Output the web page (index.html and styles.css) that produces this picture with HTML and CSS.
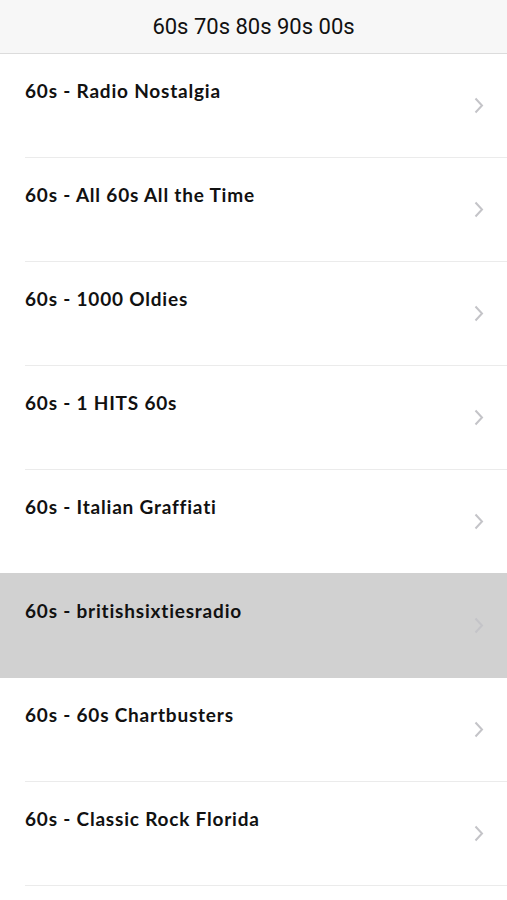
FILE: index.html
```html
<!DOCTYPE html>
<html lang="en">
<head>
<meta charset="UTF-8">
<title>60s 70s 80s 90s 00s</title>
<link rel="stylesheet" href="styles.css">
</head>
<body>
    <div class="barra">60s 70s 80s 90s 00s</div>
    <ul class="lista">
        <li class="voce"><span class="nome">60s - Radio Nostalgia</span><span class="freccia"><svg width="10" height="17" viewBox="0 0 10 17"><path d="M1.5 1.5 L8 8.5 L1.5 15.5" fill="none" stroke="#c4c4c8" stroke-width="2"/></svg></span></li>
        <li class="voce"><span class="nome">60s - All 60s All the Time</span><span class="freccia"><svg width="10" height="17" viewBox="0 0 10 17"><path d="M1.5 1.5 L8 8.5 L1.5 15.5" fill="none" stroke="#c4c4c8" stroke-width="2"/></svg></span></li>
        <li class="voce"><span class="nome">60s - 1000 Oldies</span><span class="freccia"><svg width="10" height="17" viewBox="0 0 10 17"><path d="M1.5 1.5 L8 8.5 L1.5 15.5" fill="none" stroke="#c4c4c8" stroke-width="2"/></svg></span></li>
        <li class="voce"><span class="nome">60s - 1 HITS 60s</span><span class="freccia"><svg width="10" height="17" viewBox="0 0 10 17"><path d="M1.5 1.5 L8 8.5 L1.5 15.5" fill="none" stroke="#c4c4c8" stroke-width="2"/></svg></span></li>
        <li class="voce"><span class="nome">60s - Italian Graffiati</span><span class="freccia"><svg width="10" height="17" viewBox="0 0 10 17"><path d="M1.5 1.5 L8 8.5 L1.5 15.5" fill="none" stroke="#c4c4c8" stroke-width="2"/></svg></span></li>
        <li class="voce selezionata"><span class="nome">60s - britishsixtiesradio</span><span class="freccia"><svg width="10" height="17" viewBox="0 0 10 17"><path d="M1.5 1.5 L8 8.5 L1.5 15.5" fill="none" stroke="#c4c4c8" stroke-width="2"/></svg></span></li>
        <li class="voce"><span class="nome">60s - 60s Chartbusters</span><span class="freccia"><svg width="10" height="17" viewBox="0 0 10 17"><path d="M1.5 1.5 L8 8.5 L1.5 15.5" fill="none" stroke="#c4c4c8" stroke-width="2"/></svg></span></li>
        <li class="voce"><span class="nome">60s - Classic Rock Florida</span><span class="freccia"><svg width="10" height="17" viewBox="0 0 10 17"><path d="M1.5 1.5 L8 8.5 L1.5 15.5" fill="none" stroke="#c4c4c8" stroke-width="2"/></svg></span></li>
    </ul>
</body>
</html>
```

FILE: styles.css
```css
body {margin: 0; background: #fff; font-family: Lato, "Noto Sans", sans-serif; color: #000; overflow: hidden;}
.barra {height: 53px; line-height: 54px; text-align: center; font-family: Roboto, "Liberation Sans", sans-serif; font-size: 22px; color: #111; background: #f7f7f7; border-bottom: 1px solid #dcdcdc;}
.lista {list-style: none; margin: 0; padding: 0;}
.voce {position: relative; height: 103px; display: flex; justify-content: space-between; align-items: center; padding: 0 25px; box-sizing: border-box;}
.voce::after {content: ""; position: absolute; left: 25px; right: 0; bottom: -1px; height: 1px; background: #ebebeb;}
.voce {margin-bottom: 1px;}
.nome {align-self: flex-start; padding-top: 26px; font-size: 19px; font-weight: bold; line-height: 22px; letter-spacing: 0.8px; color: #111;}
.freccia {display: flex; margin-right: -2px;}
.selezionata {background: #d1d1d1; margin-top: -1px; height: 105px; margin-bottom: 0;}
.selezionata::after {display: none;}
.selezionata .nome {padding-top: 27px;}
```
